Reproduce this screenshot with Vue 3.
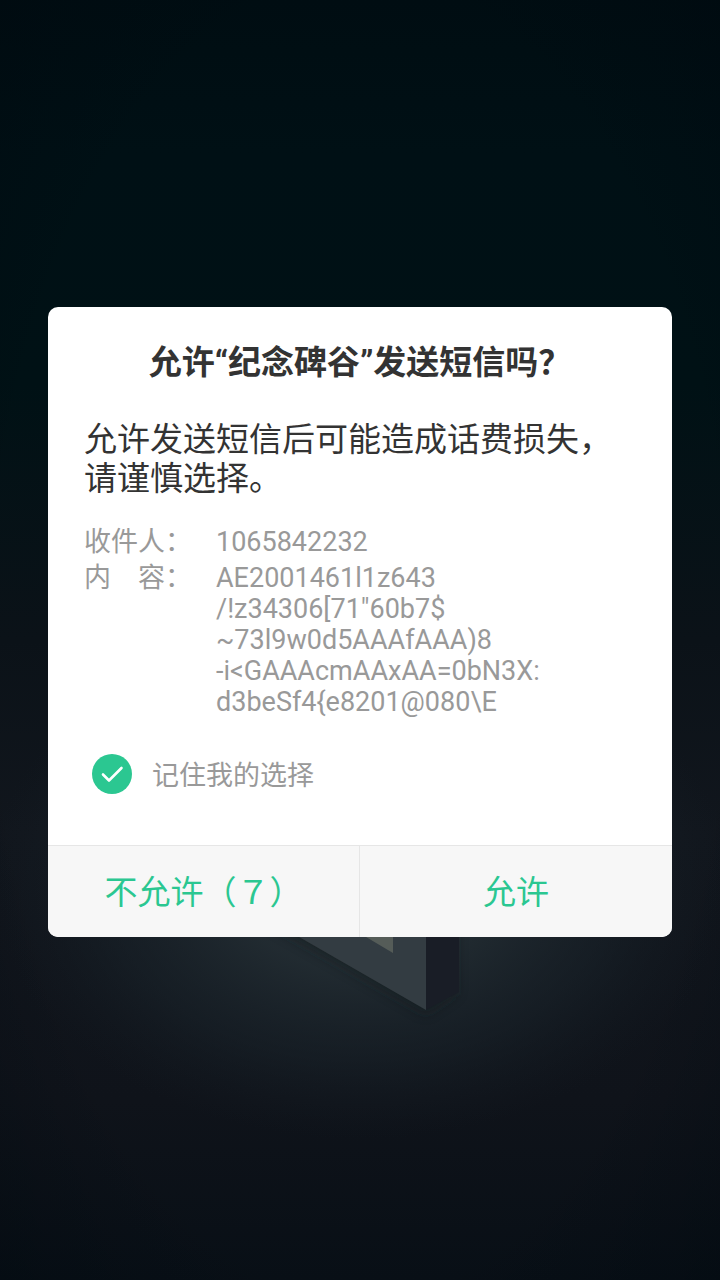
<template>
  <main class="screen">
    <svg class="scene" viewBox="0 0 720 1280" preserveAspectRatio="xMidYMid slice" aria-hidden="true">
      <defs>
        <linearGradient id="sky" x1="0" y1="0" x2="0" y2="1">
          <stop offset="0" stop-color="#000d12" />
          <stop offset="0.12" stop-color="#001015" />
          <stop offset="0.3" stop-color="#001115" />
          <stop offset="0.5" stop-color="#0b1218" />
          <stop offset="0.65" stop-color="#11161d" />
          <stop offset="0.86" stop-color="#0f131a" />
          <stop offset="1" stop-color="#080f16" />
        </linearGradient>
        <radialGradient id="glow" gradientUnits="userSpaceOnUse" cx="360" cy="880" r="370" gradientTransform="translate(0 264) scale(1 0.7)">
          <stop offset="0" stop-color="#273138" />
          <stop offset="0.35" stop-color="#232d33" stop-opacity="0.9" />
          <stop offset="0.7" stop-color="#1b252c" stop-opacity="0.5" />
          <stop offset="1" stop-color="#151d24" stop-opacity="0" />
        </radialGradient>
        <radialGradient id="edges" cx="0.5" cy="0.5" r="0.72">
          <stop offset="0.7" stop-color="#00080e" stop-opacity="0" />
          <stop offset="1" stop-color="#00080e" stop-opacity="0.4" />
        </radialGradient>
        <filter id="soft" x="-20%" y="-20%" width="140%" height="140%">
          <feGaussianBlur stdDeviation="6" />
        </filter>
      </defs>
      <rect width="720" height="1280" fill="url(#sky)" />
      <rect width="720" height="1280" fill="url(#glow)" />
      <rect width="720" height="1280" fill="url(#edges)" />
      <path d="M270 925L426 1014L456 994V900H270Z" fill="#131a1f" opacity="0.5" filter="url(#soft)" />
      <path d="M426 880H459V992L426 1010Z" fill="#191d26" />
      <path d="M200 880L426 1010V780L200 780Z" fill="#333c42" />
      <path d="M270 880L393 953V800H270Z" fill="#555c58" />
    </svg>

    <section class="dialog" role="dialog" aria-labelledby="dialog-title">
      <div class="content">
        <h1 id="dialog-title">允许“纪念碑谷”发送短信吗？</h1>
        <p class="message">允许发送短信后可能造成话费损失，请谨慎选择。</p>
        <dl class="details">
          <div v-for="row in rows" :key="row.label" class="row">
            <dt>{{ row.label }}</dt>
            <dd>
              <span v-for="line in row.lines" :key="line">{{ line }}</span>
            </dd>
          </div>
        </dl>
        <label class="remember">
          <input type="checkbox" v-model="remember" />
          <svg class="tick" viewBox="0 0 40 40" aria-hidden="true">
            <circle cx="20" cy="20" r="20" />
            <path v-if="remember" d="M11 20.5L17 26.5L29.5 14" />
          </svg>
          <span>记住我的选择</span>
        </label>
      </div>
      <div class="actions">
        <button type="button">不允许（{{ countdown }}）</button>
        <button type="button">允许</button>
      </div>
    </section>
  </main>
</template>

<script setup>
import { ref } from 'vue'

const remember = ref(true)
const countdown = ref('７')

const rows = [
  { label: '收件人：', lines: ['1065842232'] },
  {
    label: '内　容：',
    lines: [
      'AE2001461l1z643',
      '/!z34306[71"60b7$',
      '~73l9w0d5AAAfAAA)8',
      '-i<GAAAcmAAxAA=0bN3X:',
      'd3beSf4{e8201@080\\E'
    ]
  }
]
</script>

<style>
body {
  margin: 0;
  background: #001115;
}
</style>

<style scoped>
.screen {
  position: relative;
  display: flex;
  align-items: center;
  justify-content: center;
  box-sizing: border-box;
  min-height: 100vh;
  padding: 0 48px 36px;
  font-family: Roboto, "Noto Sans CJK SC", sans-serif;
}
.scene {
  position: absolute;
  inset: 0;
  width: 100%;
  height: 100%;
}
.dialog {
  position: relative;
  width: 100%;
  overflow: hidden;
  border-radius: 10px;
  background: #fff;
}
.content {
  padding: 36px 36px 51px;
}
h1 {
  margin: 0 0 37px;
  font-size: 33px;
  line-height: 40px;
  font-weight: 700;
  text-align: center;
  color: #333;
}
.message {
  margin: 0;
  font-size: 33px;
  line-height: 39px;
  color: #333;
}
.details {
  display: flex;
  flex-direction: column;
  gap: 5px;
  margin: 29px 0 36px;
  font-size: 27px;
  line-height: 31px;
  color: #999;
}
.row {
  display: flex;
}
dt {
  flex: 0 0 132px;
  white-space: nowrap;
}
dd {
  flex: 1;
  margin: 0;
}
dd span {
  display: block;
}
.remember {
  position: relative;
  display: flex;
  align-items: center;
  gap: 20px;
  padding-left: 8px;
  font-size: 27px;
  line-height: 40px;
  color: #999;
}
.remember span {
  padding-top: 4px;
  line-height: 36px;
}
.remember input {
  position: absolute;
  width: 40px;
  height: 40px;
  margin: 0;
  opacity: 0;
}
.tick {
  width: 40px;
  height: 40px;
}
.tick circle {
  fill: #2bc791;
}
.tick path {
  fill: none;
  stroke: #fff;
  stroke-width: 2.6;
  stroke-linecap: round;
  stroke-linejoin: round;
}
.actions {
  display: flex;
  border-top: 1px solid #e6e6e6;
}
.actions button {
  width: 50%;
  height: 91px;
  padding: 0 0 3px;
  border: none;
  background: #f7f7f7;
  font-family: inherit;
  font-size: 33px;
  color: #2bc791;
  cursor: pointer;
}
.actions button:first-child {
  border-right: 1px solid #e6e6e6;
}
</style>
